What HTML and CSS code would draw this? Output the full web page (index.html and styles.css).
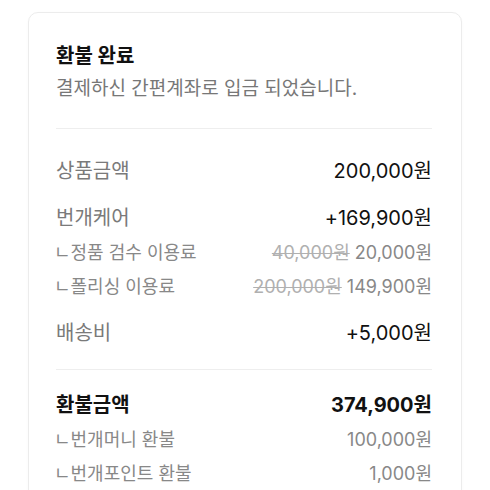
FILE: index.html
```html
<!DOCTYPE html>
<html lang="ko">
<head>
<meta charset="utf-8">
<link rel="stylesheet" href="styles.css">
</head>
<body>
<div class="card">
  <div class="head">
    <div class="title">환불 완료</div>
    <div class="desc">결제하신 간편계좌로 입금 되었습니다.</div>
  </div>
  <div class="section first">
    <div class="row main"><span class="label">상품금액</span><span class="value">200,000원</span></div>
    <div class="row main gap"><span class="label">번개케어</span><span class="value">+169,900원</span></div>
    <div class="row sub top"><span class="label">ㄴ정품 검수 이용료</span><span class="value"><s>40,000원</s> 20,000원</span></div>
    <div class="row sub"><span class="label">ㄴ폴리싱 이용료</span><span class="value"><s>200,000원</s> 149,900원</span></div>
    <div class="row main after-sub"><span class="label">배송비</span><span class="value">+5,000원</span></div>
  </div>
  <div class="section second">
    <div class="row main total"><span class="label">환불금액</span><span class="value">374,900원</span></div>
    <div class="row sub top"><span class="label">ㄴ번개머니 환불</span><span class="value">100,000원</span></div>
    <div class="row sub"><span class="label">ㄴ번개포인트 환불</span><span class="value">1,000원</span></div>
  </div>
</div>
</body>
</html>
```

FILE: styles.css
```css
html, body {
  margin: 0;
  padding: 0;
  background: #ffffff;
}
body {
  font-family: Inter, "Noto Sans CJK KR", sans-serif;
  color: #111;
  height: 490px;
  overflow: hidden;
}
.card {
  margin: 12px 0 0 28px;
  width: 434px;
  border: 1px solid #ececec;
  border-radius: 10px;
  padding: 0 29px 40px 27px;
  box-sizing: border-box;
  box-shadow: 0 1px 3px rgba(0,0,0,0.03);
}
.head {
  padding-top: 30px;
  padding-bottom: 27px;
  border-bottom: 1px solid #eeeeee;
}
.title {
  font-size: 20px;
  line-height: 26px;
  font-weight: 700;
  color: #111;
}
.desc {
  margin-top: 8px;
  font-size: 19px;
  line-height: 24px;
  color: #777;
}
.section.first {
  padding-top: 29px;
  padding-bottom: 23px;
  border-bottom: 1px solid #eeeeee;
}
.section.second {
  padding-top: 22px;
}
.row {
  display: flex;
  justify-content: space-between;
  align-items: center;
}
.row.main {
  font-size: 20px;
  line-height: 26px;
}
.row.main .label {
  color: #7a7a7a;
}
.row.main .value {
  color: #111;
}
.row.main.gap {
  margin-top: 21px;
}
.row.main.after-sub {
  margin-top: 16px;
}
.row.sub {
  font-size: 18px;
  line-height: 34px;
  color: #888;
}
.row.sub.top {
  margin-top: 5px;
}
.row.sub .label {
  margin-left: -2px;
}
.row.sub s {
  color: #b0b0b0;
  text-decoration-thickness: 1px;
}
.row.main.total .label,
.row.main.total .value {
  font-weight: 700;
  color: #111;
}
```
